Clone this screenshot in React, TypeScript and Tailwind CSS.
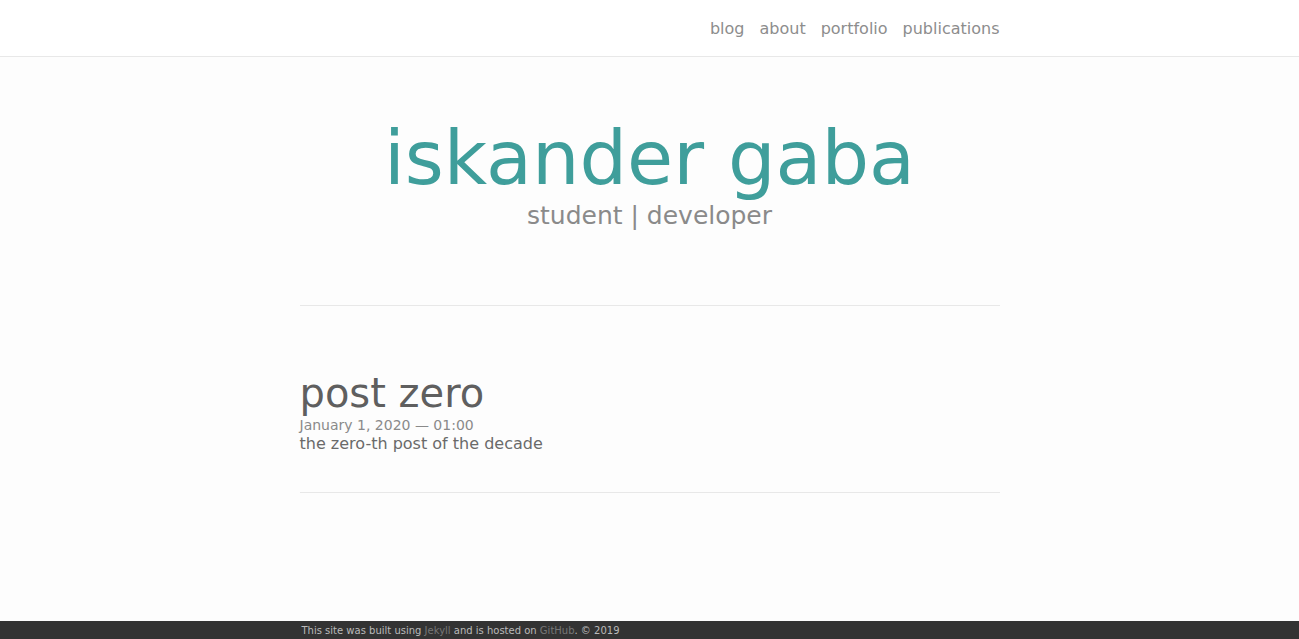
const navLinks = ["blog", "about", "portfolio", "publications"];

export default function App() {
  return (
    <div className="flex min-h-screen flex-col bg-[#fdfdfd] font-['DejaVu_Sans',sans-serif]">
      <header className="h-[57px] shrink-0 border-b border-[#e8e8e8] bg-white">
        <nav className="mx-auto flex h-full w-[700px] items-center justify-end gap-[15px] pt-[1px]">
          {navLinks.map((link) => (
            <a key={link} href="#" className="text-[16px] leading-[19px] text-[#8d8d8d]">
              {link}
            </a>
          ))}
        </nav>
      </header>

      <main className="flex-1">
        <div className="mx-auto w-[700px]">
          <div className="mt-[58px] flex flex-col items-center">
            <h1 className="text-[75px] leading-[86px] font-normal text-[#3f9e9b]">
              iskander gaba
            </h1>
            <p className="text-[25px] leading-[29px] text-[#8a8a8a]">
              student | developer
            </p>
          </div>

          <hr className="mt-[75px] border-t border-[#e8e8e8]" />

          <article className="mt-[64px] flex flex-col">
            <h2 className="text-[40px] leading-[47px] font-normal text-[#5f5f5f]">
              post zero
            </h2>
            <span className="text-[14px] leading-[17px] text-[#8a8a8a]">
              January 1, 2020 — 01:00
            </span>
            <p className="text-[16px] leading-[19px] text-[#6a6a6a]">
              the zero-th post of the decade
            </p>
          </article>

          <hr className="mt-[39px] border-t border-[#e8e8e8]" />
        </div>
      </main>

      <footer className="h-[18px] shrink-0 bg-[#333333]">
        <p className="mx-auto w-[700px] pl-[2px] pt-[1px] text-[10px] leading-[17px] text-[#bbbbbb]">
          This site was built using <a href="#" className="text-[#777777]">Jekyll</a> and is hosted on{" "}
          <a href="#" className="text-[#777777]">GitHub</a>. © 2019
        </p>
      </footer>
    </div>
  );
}
